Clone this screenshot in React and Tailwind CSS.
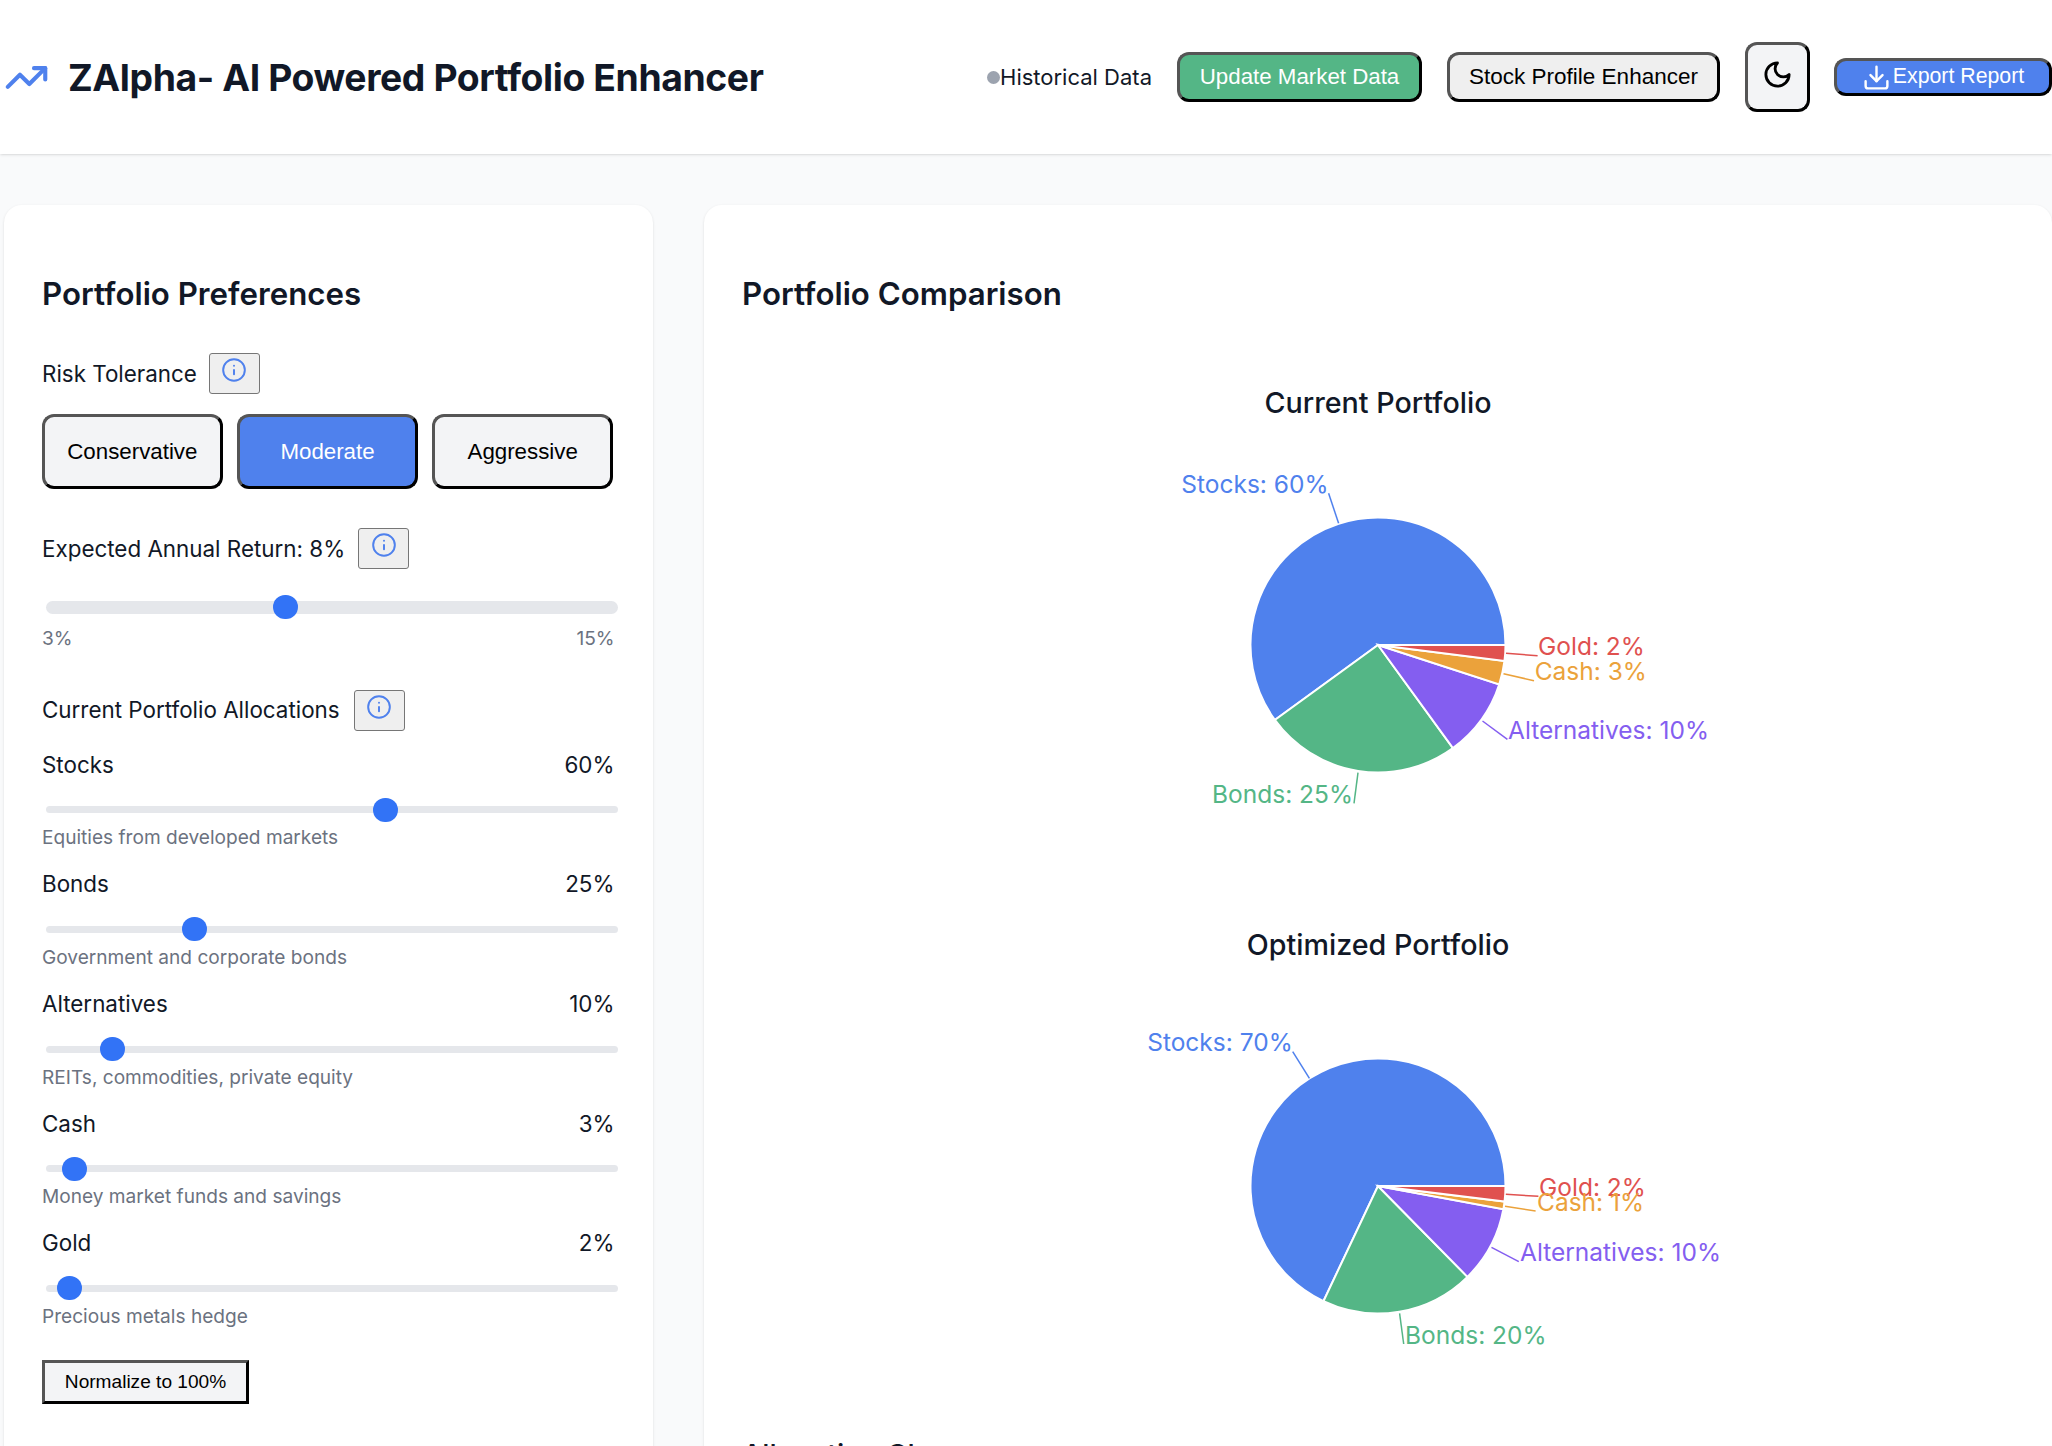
import { Info, Download, TrendingUp } from 'lucide-react';

const BLUE = '#4f81ed';
const COLORS = {
  Stocks: '#4f81ed',
  Bonds: '#54b686',
  Alternatives: '#845ef0',
  Cash: '#eba23b',
  Gold: '#e0514f',
};

const current = [
  { name: 'Stocks', value: 60 },
  { name: 'Bonds', value: 25 },
  { name: 'Alternatives', value: 10 },
  { name: 'Cash', value: 3 },
  { name: 'Gold', value: 2 },
];

const optimized = [
  { name: 'Stocks', value: 70 },
  { name: 'Bonds', value: 20 },
  { name: 'Alternatives', value: 10 },
  { name: 'Cash', value: 1 },
  { name: 'Gold', value: 2 },
];

const allocations = [
  { name: 'Stocks', value: 60, thumb: 59.5, note: 'Equities from developed markets' },
  { name: 'Bonds', value: 25, thumb: 26.1, note: 'Government and corporate bonds' },
  { name: 'Alternatives', value: 10, thumb: 11.8, note: 'REITs, commodities, private equity' },
  { name: 'Cash', value: 3, thumb: 5.1, note: 'Money market funds and savings' },
  { name: 'Gold', value: 2, thumb: 4.2, note: 'Precious metals hedge' },
];

// offsets from the pie centre
const currentLabels = [
  { name: 'Stocks', value: 60, dx: -49.5, dy: -161.2, anchor: 'end', line: [-49.4, -151.7, -39.4, -121.7] },
  { name: 'Gold', value: 2, dx: 160, dy: 0.5, anchor: 'start', line: [128, 8.3, 159.6, 10.7] },
  { name: 'Cash', value: 3, dx: 156.7, dy: 25.5, anchor: 'start', line: [125.5, 28.7, 156, 35.7] },
  { name: 'Alternatives', value: 10, dx: 130, dy: 84.5, anchor: 'start', line: [104.5, 76, 129.4, 94.3] },
  { name: 'Bonds', value: 25, dx: -25, dy: 148.8, anchor: 'end', line: [-20, 127.7, -24, 158.3] },
];

const optimizedLabels = [
  { name: 'Stocks', value: 70, dx: -85.3, dy: -144, anchor: 'end', line: [-85.3, -134.3, -68.6, -107.7] },
  { name: 'Gold', value: 2, dx: 161, dy: 0.7, anchor: 'start', line: [127.8, 8.3, 160.4, 10.3] },
  { name: 'Cash', value: 1, dx: 159, dy: 15.7, anchor: 'start', line: [127, 20.3, 157.6, 25] },
  { name: 'Alternatives', value: 10, dx: 142, dy: 65.7, anchor: 'start', line: [113.5, 61.3, 140.8, 75.7] },
  { name: 'Bonds', value: 20, dx: 27, dy: 149, anchor: 'start', line: [21.6, 127.3, 25.7, 158] },
];

const InfoButton = () => (
  <button className="w-[51px] h-[41px] flex justify-center pt-[3px] bg-[#efefef] border border-[#767676] rounded-[3px]">
    <Info size={26} strokeWidth={1.8} color={BLUE} />
  </button>
);

const Slider = ({ thumb, track }) => (
  <div className="relative h-6 ml-[3.5px] mr-[-3px] flex items-center">
    <div className={`w-full rounded-full bg-[#e5e7eb] ${track}`} />
    <div
      className="absolute top-0 w-[25px] h-6 -ml-[12.5px] rounded-full bg-[#3273f6]"
      style={{ left: `${thumb}%` }}
    />
  </div>
);

const RiskButton = ({ label, active }) => (
  <button
    className={`flex-1 h-[75px] rounded-[12px] border-[3px] border-t-[#555] border-l-[#555] border-r-black border-b-black font-['Liberation_Sans',sans-serif] text-[22.3px] ${
      active ? 'bg-[#4f81ed] text-white' : 'bg-[#f3f4f6] text-black'
    }`}
  >
    {label}
  </button>
);

// slices run counter-clockwise from 3 o'clock, same as the chart lib does it
const Pie = ({ data, labels }) => {
  const cx = 400;
  const cy = 190;
  const r = 127.5;
  let angle = 0;
  const total = data.reduce((sum, d) => sum + d.value, 0);
  const slices = data.map((d) => {
    const start = angle;
    angle += (d.value / total) * 360;
    const a0 = (start * Math.PI) / 180;
    const a1 = (angle * Math.PI) / 180;
    const large = angle - start > 180 ? 1 : 0;
    const path = `M${cx} ${cy} L${cx + r * Math.cos(a0)} ${cy - r * Math.sin(a0)} A${r} ${r} 0 ${large} 0 ${cx + r * Math.cos(a1)} ${cy - r * Math.sin(a1)} Z`;
    return { ...d, path };
  });

  return (
    <svg width="800" height="380" className="block">
      {slices.map((s) => (
        <path key={s.name} d={s.path} fill={COLORS[s.name]} stroke="#fff" strokeWidth="2" />
      ))}
      {labels.map((l) => (
        <g key={l.name}>
          <line
            x1={cx + l.line[0]}
            y1={cy + l.line[1]}
            x2={cx + l.line[2]}
            y2={cy + l.line[3]}
            stroke={COLORS[l.name]}
            strokeWidth="1.5"
          />
          <text
            x={cx + l.dx}
            y={cy + l.dy}
            textAnchor={l.anchor}
            fill={COLORS[l.name]}
            fontSize="24.5"
            dominantBaseline="central"
          >
            {l.name}: {l.value}%
          </text>
        </g>
      ))}
    </svg>
  );
};

const App = () => {
  const btnBorder = 'border-[3px] border-t-[#555] border-l-[#555] border-r-black border-b-black';

  return (
    <div className="h-[1446px] overflow-hidden bg-[#f9fafb] text-[#111827] font-['Inter',sans-serif]">
      {/* Header */}
      <header className="h-[154px] bg-white shadow-sm flex items-center justify-between pl-[4px]">
        <div className="flex items-center gap-[19px]">
          <TrendingUp size={45} strokeWidth={2.2} color={BLUE} />
          <h1 className="text-[37.3px] font-bold tracking-[-0.4px] mt-[2px]">ZAlpha- AI Powered Portfolio Enhancer</h1>
        </div>
        <div className="flex items-center font-['Liberation_Sans',sans-serif]">
          <span className="w-[13px] h-[13px] rounded-full bg-[#9ca3af]" />
          <span className="text-[22px] mr-[25px] font-['Inter',sans-serif]">Historical Data</span>
          <button className={`h-[50px] w-[245px] rounded-[12px] bg-[#54b686] text-white text-[22.3px] pb-[1px] mr-[25px] ${btnBorder}`}>
            Update Market Data
          </button>
          <button className={`h-[50px] w-[273px] rounded-[12px] bg-[#efefef] text-black text-[22.5px] pb-[1px] mr-[25px] ${btnBorder}`}>
            Stock Profile Enhancer
          </button>
          <button className={`w-[65px] h-[70px] rounded-[12px] bg-[#f3f4f6] flex items-center justify-center mr-[24px] ${btnBorder}`}>
            <svg width="31" height="31" viewBox="0 0 24 24" fill="none" stroke="#000" strokeWidth="2.2" strokeLinecap="round" strokeLinejoin="round" className="mb-[6px]">
              <path d="M12 3a6 6 0 0 0 9 9 9 9 0 1 1-9-9Z" />
            </svg>
          </button>
          <button className={`w-[218px] h-[38px] rounded-[12px] bg-[#4f81ed] text-white text-[21.3px] flex items-center justify-center gap-[2px] ${btnBorder}`}>
            <Download size={29} color="#fff" className="shrink-0" />
            <span className="pb-[1px]">Export Report</span>
          </button>
        </div>
      </header>

      <main className="flex pl-[4px] pt-[51px] gap-[51px]">
        {/* Preferences */}
        <section className="w-[649px] h-[1300px] shrink-0 bg-white rounded-[18px] shadow-sm pl-[38px] pr-[38.5px] pt-[67px]">
          <h2 className="text-[31.25px] font-semibold leading-[44px]">Portfolio Preferences</h2>

          <div className="flex items-center gap-[12px] mt-[37px]">
            <span className="text-[22.4px]">Risk Tolerance</span>
            <InfoButton />
          </div>
          <div className="flex w-[571px] gap-[14.5px] mt-[20px]">
            <RiskButton label="Conservative" />
            <RiskButton label="Moderate" active />
            <RiskButton label="Aggressive" />
          </div>

          <div className="flex items-center gap-[13px] mt-[39px]">
            <span className="text-[22.4px]">Expected Annual Return: 8%</span>
            <InfoButton />
          </div>
          <div className="mt-[26px]">
            <Slider thumb={42} track="h-[13px]" />
          </div>
          <div className="flex justify-between text-[19.1px] text-[#6b7280] mt-[5px]">
            <span>3%</span>
            <span>15%</span>
          </div>

          <div className="flex items-center gap-[14px] mt-[37px]">
            <span className="text-[22.4px]">Current Portfolio Allocations</span>
            <InfoButton />
          </div>

          {allocations.map((a, i) => (
            <div key={a.name} className={i === 0 ? 'mt-[18px]' : 'mt-[17.2px]'}>
              <div className="flex justify-between text-[22.4px] leading-[32px]">
                <span>{a.name}</span>
                <span>{a.value}%</span>
              </div>
              <div className="mt-[17px]">
                <Slider thumb={a.thumb} track="h-[7px]" />
              </div>
              <p className="text-[19.1px] text-[#6b7280] leading-[28px] mt-[1.5px]">{a.note}</p>
            </div>
          ))}

          <button className={`mt-[30px] w-[207px] h-[44px] bg-[#f3f4f6] text-black text-[19.1px] font-['Liberation_Sans',sans-serif] ${btnBorder}`}>
            Normalize to 100%
          </button>
        </section>

        {/* Comparison */}
        <section className="flex-1 h-[1300px] bg-white rounded-[18px] shadow-sm px-[38px] pt-[67px]">
          <h2 className="text-[31.25px] font-semibold leading-[44px]">Portfolio Comparison</h2>
          <div className="flex flex-col items-center mt-[67px]">
            <h3 className="text-[28.7px] font-medium leading-[40px]">Current Portfolio</h3>
            <div className="mt-[32px]">
              <Pie data={current} labels={currentLabels} />
            </div>
            <h3 className="text-[28.7px] font-medium leading-[40px] mt-[90px]">Optimized Portfolio</h3>
            <div className="mt-[31px]">
              <Pie data={optimized} labels={optimizedLabels} />
            </div>
          </div>
          <h3 className="text-[28.7px] font-medium mt-[57px]">Allocation Changes</h3>
        </section>
      </main>
    </div>
  );
};

export default App;
